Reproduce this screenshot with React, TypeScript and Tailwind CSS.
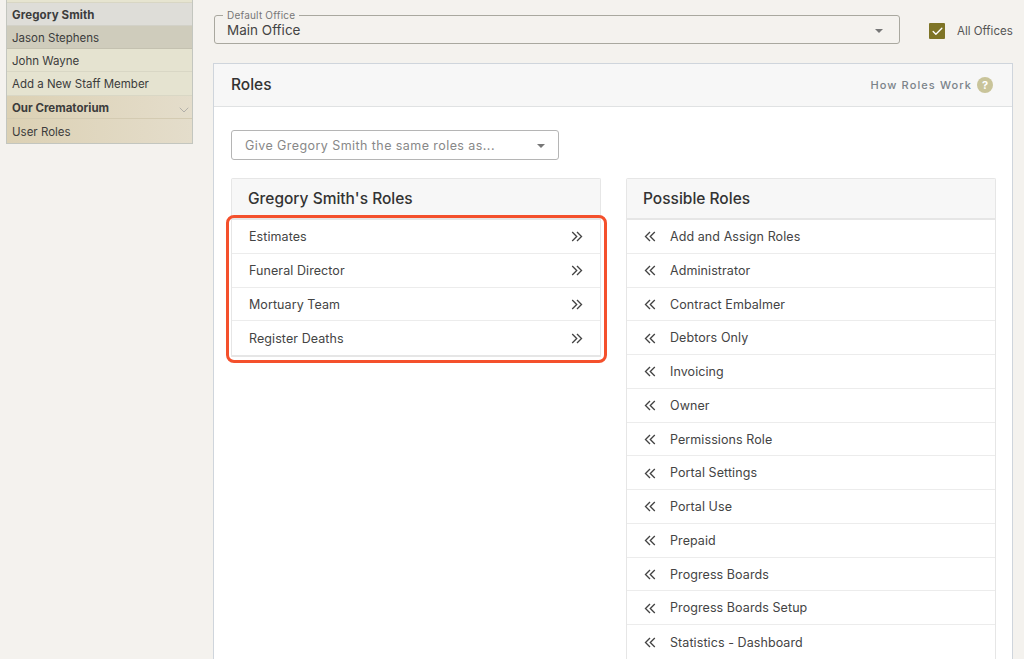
import React from "react";
import { Check, ChevronDown } from "lucide-react";

const myRoles = ["Estimates", "Funeral Director", "Mortuary Team", "Register Deaths"];
const possibleRoles = [
  "Add and Assign Roles",
  "Administrator",
  "Contract Embalmer",
  "Debtors Only",
  "Invoicing",
  "Owner",
  "Permissions Role",
  "Portal Settings",
  "Portal Use",
  "Prepaid",
  "Progress Boards",
  "Progress Boards Setup",
  "Statistics - Dashboard",
];

const Caret = () => <span className="w-0 h-0 border-x-[4px] border-x-transparent border-t-[4px] border-t-[#777]" />;

// tighter than lucide's chevrons, drawn to match the move arrows
const DoubleChevron: React.FC<{ flip?: boolean }> = ({ flip }) => (
  <svg width="12" height="11" viewBox="0 0 12 11" fill="none" stroke="#444" strokeWidth="1.35" className={flip ? "shrink-0 rotate-180" : "shrink-0"}>
    <path d="M1.2 1 L5.7 5.5 L1.2 10 M6 1 L10.5 5.5 L6 10" />
  </svg>
);

const App: React.FC = () => {
  return (
    <div className="relative flex h-[659px] w-full overflow-hidden bg-[#f4f2ee] font-['Inter',sans-serif] text-[#333]">
      {/* Sidebar */}
      <div className="ml-[6px] w-[187px] shrink-0">
        <div className="border-x border-b border-[#c3c6bf] text-[11.5px] text-[#3c3c3c]">
          <div className="h-[3px] bg-[#e6e4d0] border-b border-[#d8d6c4]" />
          <div className="flex h-[23px] items-center pl-[5px] pt-[3px] font-bold tracking-[0.1px] bg-[#deddd8] border-b border-[#d2d1c8]">Gregory Smith</div>
          <div className="flex h-[23px] items-center pl-[5px] pt-[3px] bg-[#cfccbc] border-b border-[#c4c1b0]">Jason Stephens</div>
          <div className="flex h-[23px] items-center pl-[5px] pt-[3px] bg-[#e5e3d0] border-b border-[#d9d7c5]">John Wayne</div>
          <div className="flex h-[24px] items-center pl-[5px] pt-[3px] bg-[#e5e3d0] border-b border-[#d9d7c5]">Add a New Staff Member</div>
          <div className="flex h-[23px] items-center justify-between pl-[5px] pt-[3px] font-bold bg-gradient-to-r from-[#dcd1b4] to-[#e4ddcb] border-b border-[#d4cbb2]">
            <span>Our Crematorium</span>
            <ChevronDown size={16} strokeWidth={1} className="mt-[2px] text-[#999]" />
          </div>
          <div className="flex h-[24px] items-center pl-[5px] pt-[3px] bg-gradient-to-r from-[#dcd1b4] to-[#e4ddcb]">User Roles</div>
        </div>
      </div>

      {/* Main */}
      <div className="ml-[20px] flex w-[800px] shrink-0 flex-col">
        <div className="flex h-[63px] shrink-0 items-start pl-[1px]">
          <fieldset className="mt-[9px] h-[35px] w-[686px] shrink-0 rounded-[3px] border border-[#a9a89f] pl-[8px] pr-[16px]">
            <legend className="px-[4px] pt-[1px] text-[10px] leading-[11px] tracking-[0.2px] text-[#777]">Default Office</legend>
            <div className="mt-[1px] flex items-center justify-between pl-[4px]">
              <span className="text-[13.5px] leading-[17px] text-[#444]">Main Office</span>
              <Caret />
            </div>
          </fieldset>
          <div className="ml-[29px] mt-[23px] flex h-[16px] w-[16px] shrink-0 items-center justify-center rounded-[1px] bg-[#7e7426]">
            <Check size={13} strokeWidth={2.5} className="text-white" />
          </div>
          <span className="ml-[12px] mt-[24px] whitespace-nowrap text-[11.5px] leading-[15px] text-[#555]">All Offices</span>
        </div>

        {/* Roles panel */}
        <div className="flex-1 border border-[#cfd5dc] bg-white">
          <div className="flex h-[43px] items-center justify-between border-b border-[#e0e2e3] bg-[#f7f7f7] pl-[17px] pr-[19px]">
            <span className="text-[15.5px] font-medium text-[#333]">Roles</span>
            <div className="flex items-center gap-[5px]">
              <span className="text-[11px] font-medium tracking-[1.1px] text-[#7b838a]">How Roles Work</span>
              <span className="flex h-[16px] w-[16px] items-center justify-center rounded-full bg-[#c9c49a] text-[11px] font-bold text-white">?</span>
            </div>
          </div>

          <div className="pl-[17px] pt-[23px]">
            <div className="flex h-[30px] w-[328px] items-center justify-between rounded-[3px] border border-[#b5b5b5] pl-[13px] pr-[13px] pt-[2px]">
              <span className="text-[12.5px] tracking-[0.43px] text-[#888]">Give Gregory Smith the same roles as...</span>
              <Caret />
            </div>

            <div className="mt-[18px] flex items-start gap-[25px]">
              <RoleColumn title="Gregory Smith's Roles" roles={myRoles} side="left" />
              <RoleColumn title="Possible Roles" roles={possibleRoles} side="right" />
            </div>
          </div>
        </div>
      </div>

      {/* Annotation */}
      <div className="absolute left-[226px] top-[215px] h-[148px] w-[381px] rounded-[8px] border-[3px] border-[#f4502c]" />
    </div>
  );
};

const RoleColumn: React.FC<{ title: string; roles: string[]; side: "left" | "right" }> = ({ title, roles, side }) => (
  <div className="w-[370px] shrink-0 rounded-t-[2px] border-x border-t border-[#e6e6e6]">
    <div className="flex h-[41px] items-center border-b-2 border-[#e6e6e6] bg-[#f7f7f7] pl-[16px] text-[15.5px] font-medium text-[#333]">
      {title}
    </div>
    <div className="border-b-2 border-[#e6e6e6]">
      {roles.map((role) =>
        side === "left" ? (
          <div key={role} className="flex h-[33.75px] items-center justify-between border-b border-[#ececec] pl-[17px] pr-[17px] pt-[1px] text-[12.5px] tracking-[0.08px] text-[#444] last:border-b-0">
            <span className="pt-[1px]">{role}</span>
            <DoubleChevron />
          </div>
        ) : (
          <div key={role} className="flex h-[33.75px] items-center border-b border-[#ececec] pl-[17px] pt-[1px] text-[12.5px] tracking-[0.08px] text-[#444] last:border-b-0">
            <DoubleChevron flip />
            <span className="ml-[14px] pt-[1px]">{role}</span>
          </div>
        )
      )}
    </div>
  </div>
);

export default App;
